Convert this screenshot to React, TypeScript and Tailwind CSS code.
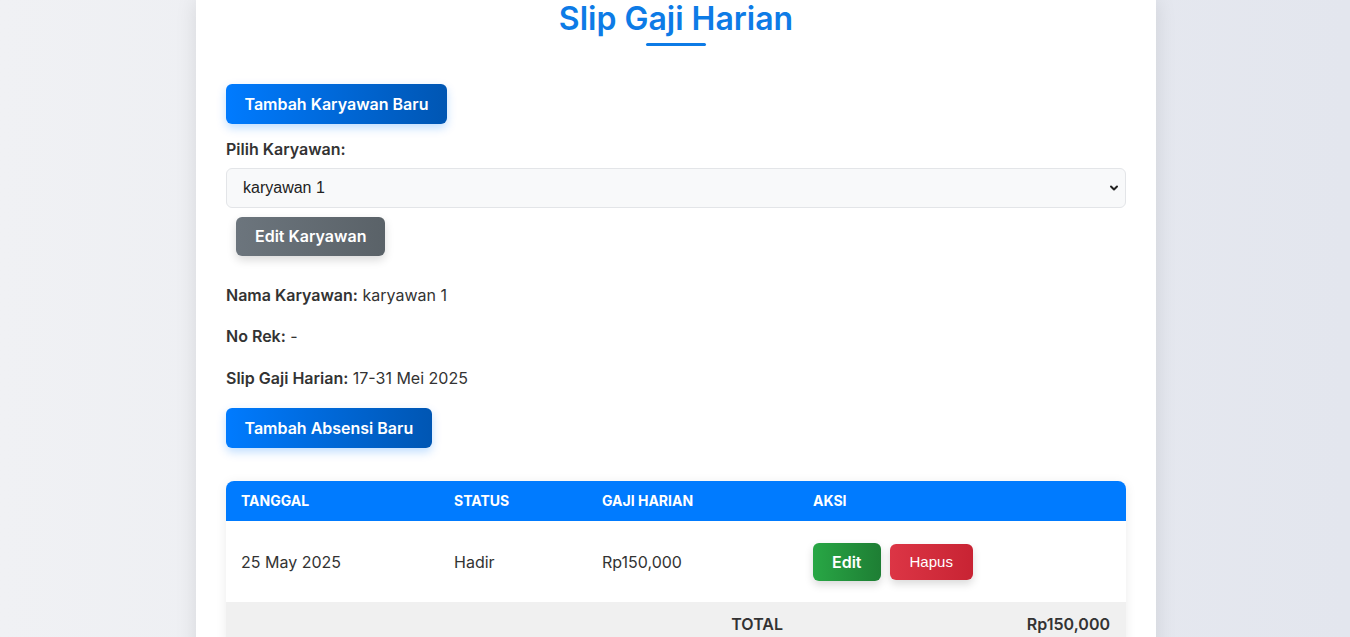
import { ChevronDown } from 'lucide-react';

export default function App() {
  return (
    <div className="min-h-screen bg-gradient-to-r from-[#f0f1f4] to-[#e3e6ee] pl-[2px] font-['Inter',sans-serif] text-[#333]">
      <div className="mx-auto w-[960px] bg-white px-[30px] pb-10 shadow-[0_0_20px_rgba(0,0,0,0.1)]">
        {/* Header */}
        <div className="flex flex-col items-center">
          <h1 className="text-[32px] font-semibold leading-[38px] text-[#0d7be6]">Slip Gaji Harian</h1>
          <div className="mt-[5px] h-[3px] w-[60px] rounded-sm bg-[#0d7be6]" />
        </div>

        <button className="mt-[38px] h-10 rounded-md bg-gradient-to-r from-[#007bff] to-[#0056b3] px-[18.5px] text-base font-semibold text-white shadow-[0_4px_10px_rgba(0,123,255,0.25)]">
          Tambah Karyawan Baru
        </button>

        <label className="mt-[13px] mb-[5px] block text-base font-semibold leading-[25.6px]">Pilih Karyawan:</label>
        <div className="relative">
          <select className="h-10 w-full appearance-none rounded-md border border-[#e3e5e8] bg-[#f8f9fa] px-4 font-['Liberation_Sans',Arial,sans-serif] text-base text-[#222]">
            <option>karyawan 1</option>
          </select>
          <ChevronDown className="pointer-events-none absolute right-[6px] top-[14px] h-3 w-3 text-[#222]" strokeWidth={4} />
        </div>

        <button className="m-[10px] mt-[9px] h-[39px] rounded-md bg-gradient-to-r from-[#6c757d] to-[#5a6268] px-[19px] text-base font-semibold text-white shadow-[0_4px_10px_rgba(0,0,0,0.15)]">
          Edit Karyawan
        </button>

        {/* Info */}
        <div className="text-base leading-[25.6px]">
          <p className="mt-[17px]"><span className="font-semibold">Nama Karyawan:</span> karyawan 1</p>
          <p className="mt-4"><span className="font-semibold">No Rek:</span> -</p>
          <p className="mt-4"><span className="font-semibold">Slip Gaji Harian:</span> 17-31 Mei 2025</p>
        </div>

        <button className="mt-[17px] h-10 rounded-md bg-gradient-to-r from-[#007bff] to-[#0056b3] px-[18.5px] text-base font-semibold text-white shadow-[0_4px_10px_rgba(0,123,255,0.25)]">
          Tambah Absensi Baru
        </button>

        {/* Table */}
        <div className="mt-[33px] overflow-hidden rounded-t-lg shadow-[0_2px_12px_rgba(0,0,0,0.08)]">
          <table className="w-full table-fixed border-collapse">
            <colgroup>
              <col className="w-[213px]" />
              <col className="w-[148px]" />
              <col className="w-[211px]" />
              <col />
            </colgroup>
            <thead>
              <tr className="h-10 bg-[#007bff] text-left text-sm font-bold uppercase text-white">
                <th className="px-[15px]">Tanggal</th>
                <th className="px-[15px]">Status</th>
                <th className="px-[15px]">Gaji Harian</th>
                <th className="px-[15px]">Aksi</th>
              </tr>
            </thead>
            <tbody>
              <tr className="h-[81px] bg-white text-base">
                <td className="px-[15px]">25 May 2025</td>
                <td className="px-[15px]">Hadir</td>
                <td className="px-[15px]">Rp150,000</td>
                <td className="px-[15px]">
                  <div className="flex items-center gap-[9px]">
                    <button className="h-[38px] rounded-md bg-gradient-to-r from-[#28a745] to-[#1e7e34] px-[19px] text-base font-semibold text-white shadow-[0_4px_8px_rgba(0,0,0,0.15)]">
                      Edit
                    </button>
                    <button className="h-9 rounded-md bg-gradient-to-r from-[#dc3545] to-[#c82333] px-5 font-['Liberation_Sans',Arial,sans-serif] text-[15px] text-white shadow-[0_4px_8px_rgba(0,0,0,0.15)]">
                      Hapus
                    </button>
                  </div>
                </td>
              </tr>
              <tr className="h-11 bg-[#f0f0f0] text-base font-semibold">
                <td colSpan={2} />
                <td className="px-[15px] text-right">TOTAL</td>
                <td className="px-4 text-right">Rp150,000</td>
              </tr>
            </tbody>
          </table>
        </div>
      </div>
    </div>
  );
}
